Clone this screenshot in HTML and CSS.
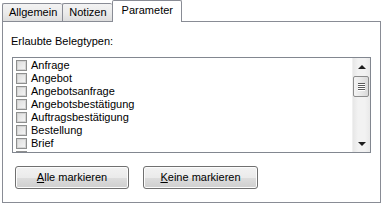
FILE: index.html
```html
<!DOCTYPE html>
<html lang="de">
<head>
  <meta charset="UTF-8">
  <title>Parameter</title>
  <link rel="stylesheet" href="styles.css">
</head>
<body>

  <!-- Reiter -->
  <div class="tabs">
    <div class="tab">Allgemein</div>
    <div class="tab">Notizen</div>
    <div class="tab active">Parameter</div>
  </div>

  <div class="panel">
    <div class="caption">Erlaubte Belegtypen:</div>

    <div class="list">
      <div class="items">
        <div class="item"><span class="check"></span>Anfrage</div>
        <div class="item"><span class="check"></span>Angebot</div>
        <div class="item"><span class="check"></span>Angebotsanfrage</div>
        <div class="item"><span class="check"></span>Angebotsbestätigung</div>
        <div class="item"><span class="check"></span>Auftragsbestätigung</div>
        <div class="item"><span class="check"></span>Bestellung</div>
        <div class="item"><span class="check"></span>Brief</div>
        <div class="item"><span class="check"></span></div>
      </div>
      <div class="scrollbar">
        <div class="arrow up"></div>
        <div class="thumb">
          <span></span><span></span><span></span><span></span>
        </div>
        <div class="track"></div>
        <div class="arrow down"></div>
      </div>
    </div>

    <div class="buttons">
      <div class="button"><u>A</u>lle markieren</div>
      <div class="button"><u>K</u>eine markieren</div>
    </div>
  </div>

</body>
</html>
```

FILE: styles.css
```css
body {
  margin: 0;
  background: #fff;
  color: #000;
  font-family: "Liberation Sans", Arial, sans-serif;
  font-size: 11px;
  line-height: 13px;
}

/* Reiter */
.tabs {
  display: flex;
  align-items: flex-end;
  height: 21px;
  padding-left: 2px;
}

.tab {
  height: 17px;
  padding: 0 5px 0 6px;
  line-height: 17px;
  border: 1px solid #898c95;
  border-bottom: none;
  border-right: none;
  background: linear-gradient(to bottom, #f3f3f3 0%, #ebebeb 50%, #dedede 100%);
  border-radius: 2px 2px 0 0;
}

.tab.active {
  height: 21px;
  line-height: 18px;
  padding: 0 8px 0 9px;
  margin-bottom: -1px;
  background: #fff;
  border-right: 1px solid #898c95;
  position: relative;
  z-index: 1;
}

/* Seite */
.panel {
  height: 182px;
  margin: 0 1px 0 2px;
  border: 1px solid #898c95;
  padding: 13px 9px 0 9px;
  box-sizing: border-box;
}

.caption {
  margin-left: -1px;
  margin-bottom: 9px;
}

.list {
  display: flex;
  height: 96px;
  border: 1px solid #828790;
  box-sizing: border-box;
  overflow: hidden;
}

.items {
  flex: 1;
  padding: 1px 0 0 3px;
}

.item {
  display: flex;
  align-items: center;
  height: 13px;
  white-space: nowrap;
}

.check {
  width: 11px;
  height: 11px;
  box-sizing: border-box;
  border: 1px solid #8e8f8f;
  background: linear-gradient(to bottom right, #dcdcdc 0%, #f6f6f6 100%);
  box-shadow: inset 0 0 0 1px #d4d4d4;
  margin-right: 4px;
}

.scrollbar {
  width: 17px;
  display: flex;
  flex-direction: column;
  background: linear-gradient(to right, #e7e7e7 0%, #f2f2f2 30%, #f2f2f2 70%, #e9e9e9 100%);
  border-left: 1px solid #f0f0f0;
}

.arrow {
  height: 17px;
  display: flex;
  align-items: center;
  justify-content: center;
}

.arrow::before {
  content: "";
  width: 0;
  height: 0;
  border-left: 4px solid transparent;
  border-right: 4px solid transparent;
}

.arrow.up::before {
  border-bottom: 4px solid #1e1e1e;
}

.arrow.down::before {
  border-top: 4px solid #1e1e1e;
}

.thumb {
  height: 21px;
  margin: 1px 1px 0 0;
  border: 1px solid #8c8c8c;
  border-radius: 2px;
  box-sizing: border-box;
  background: linear-gradient(to right, #f4f4f4 0%, #e8e8e8 50%, #d9d9d9 100%);
  display: flex;
  flex-direction: column;
  align-items: center;
  justify-content: center;
  gap: 1px;
}

.thumb span {
  width: 7px;
  height: 1px;
  background: #5a5a5a;
  box-shadow: 0 1px 0 #fff;
}

.track {
  flex: 1;
}

/* Knöpfe */
.buttons {
  display: flex;
  gap: 14px;
  padding: 13px 0 0 3px;
}

.button {
  width: 114px;
  height: 23px;
  box-sizing: border-box;
  border: 1px solid #707070;
  border-radius: 3px;
  background: linear-gradient(to bottom, #f2f2f2 0%, #ebebeb 50%, #dddddd 51%, #cfcfcf 100%);
  box-shadow: inset 0 0 0 1px #fcfcfc;
  text-align: center;
  line-height: 21px;
}

.button + .button {
  width: 115px;
}
```
